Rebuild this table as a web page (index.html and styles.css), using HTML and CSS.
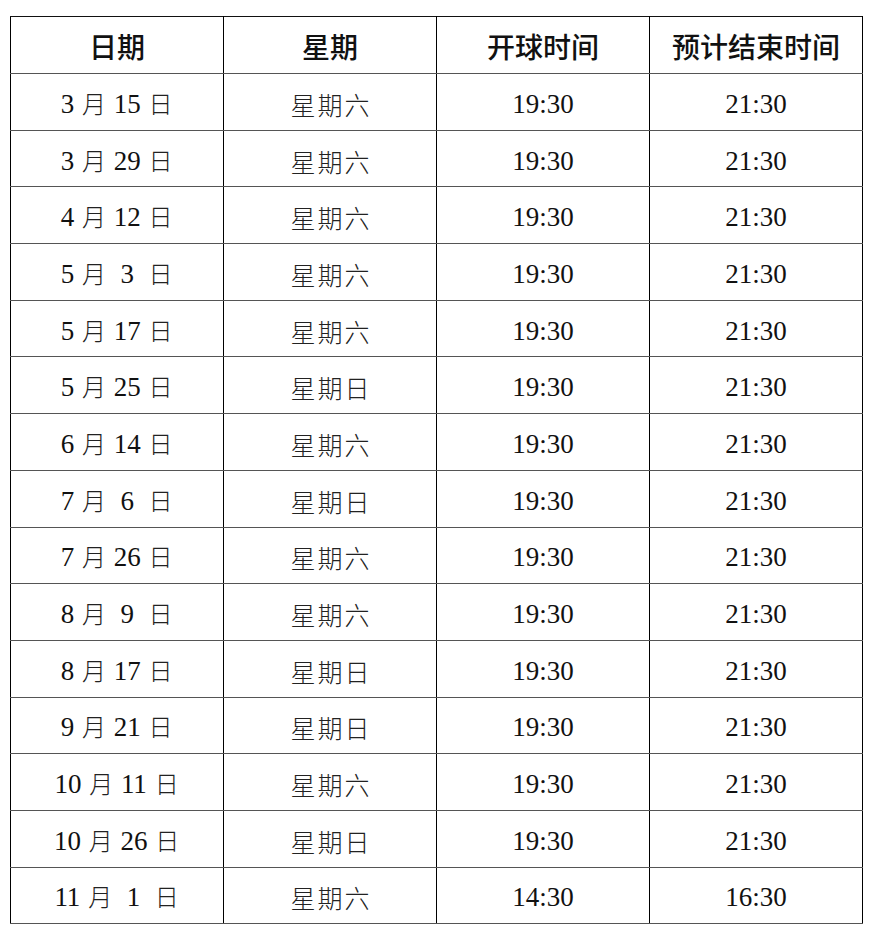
FILE: index.html
```html
<!DOCTYPE html>
<html lang="zh-CN">
<head>
<meta charset="utf-8">
<title>赛程</title>
<link rel="stylesheet" href="styles.css">
</head>
<body>
<table class="schedule">
  <thead>
    <tr><th>日期</th><th>星期</th><th>开球时间</th><th>预计结束时间</th></tr>
  </thead>
  <tbody>
    <tr><td class="date">3 <span class="cj">月</span> 15 <span class="cj">日</span></td><td class="wk">星期六</td><td>19:30</td><td>21:30</td></tr>
    <tr><td class="date">3 <span class="cj">月</span> 29 <span class="cj">日</span></td><td class="wk">星期六</td><td>19:30</td><td>21:30</td></tr>
    <tr><td class="date">4 <span class="cj">月</span> 12 <span class="cj">日</span></td><td class="wk">星期六</td><td>19:30</td><td>21:30</td></tr>
    <tr><td class="date">5 <span class="cj">月</span>  3  <span class="cj">日</span></td><td class="wk">星期六</td><td>19:30</td><td>21:30</td></tr>
    <tr><td class="date">5 <span class="cj">月</span> 17 <span class="cj">日</span></td><td class="wk">星期六</td><td>19:30</td><td>21:30</td></tr>
    <tr><td class="date">5 <span class="cj">月</span> 25 <span class="cj">日</span></td><td class="wk">星期日</td><td>19:30</td><td>21:30</td></tr>
    <tr><td class="date">6 <span class="cj">月</span> 14 <span class="cj">日</span></td><td class="wk">星期六</td><td>19:30</td><td>21:30</td></tr>
    <tr><td class="date">7 <span class="cj">月</span>  6  <span class="cj">日</span></td><td class="wk">星期日</td><td>19:30</td><td>21:30</td></tr>
    <tr><td class="date">7 <span class="cj">月</span> 26 <span class="cj">日</span></td><td class="wk">星期六</td><td>19:30</td><td>21:30</td></tr>
    <tr><td class="date">8 <span class="cj">月</span>  9  <span class="cj">日</span></td><td class="wk">星期六</td><td>19:30</td><td>21:30</td></tr>
    <tr><td class="date">8 <span class="cj">月</span> 17 <span class="cj">日</span></td><td class="wk">星期日</td><td>19:30</td><td>21:30</td></tr>
    <tr><td class="date">9 <span class="cj">月</span> 21 <span class="cj">日</span></td><td class="wk">星期日</td><td>19:30</td><td>21:30</td></tr>
    <tr><td class="date">10 <span class="cj">月</span> 11 <span class="cj">日</span></td><td class="wk">星期六</td><td>19:30</td><td>21:30</td></tr>
    <tr><td class="date">10 <span class="cj">月</span> 26 <span class="cj">日</span></td><td class="wk">星期日</td><td>19:30</td><td>21:30</td></tr>
    <tr><td class="date">11 <span class="cj">月</span>  1  <span class="cj">日</span></td><td class="wk">星期六</td><td>14:30</td><td>16:30</td></tr>
  </tbody>
</table>
</body>
</html>
```
FILE: styles.css
```css
html, body {
  margin: 0;
  padding: 0;
  background: #ffffff;
}

body {
  padding: 16px 0 0 10px;
}

.schedule {
  border-collapse: collapse;
  table-layout: fixed;
  width: 853px;
  color: #111;
}

.schedule th,
.schedule td {
  padding: 0;
  text-align: center;
  vertical-align: middle;
  border-left: 1px solid #000;
  border-right: 1px solid #000;
  border-top: 1px solid #555;
  border-bottom: 1px solid #555;
}

.schedule th {
  height: 54px;
  padding-top: 2px;
  font-family: "Noto Sans CJK SC", "Noto Sans", sans-serif;
  font-weight: 500;
  font-size: 28px;
  line-height: 1;
  color: #111;
  border-top-color: #111;
}

.schedule td {
  height: 50.7px;
  padding-top: 5px;
  font-family: "Liberation Serif", "Noto Sans CJK SC", serif;
  font-size: 27px;
  line-height: 1;
  white-space: pre;
}

.schedule td.wk {
  font-family: "Noto Sans CJK SC", serif;
  font-weight: 300;
  font-size: 25px;
  letter-spacing: 2px;
  text-indent: 2px;
  color: #222;
}

.schedule .cj {
  font-family: "Noto Sans CJK SC", serif;
  font-weight: 300;
  font-size: 24px;
  margin: 0 1px;
  color: #222;
}
```
